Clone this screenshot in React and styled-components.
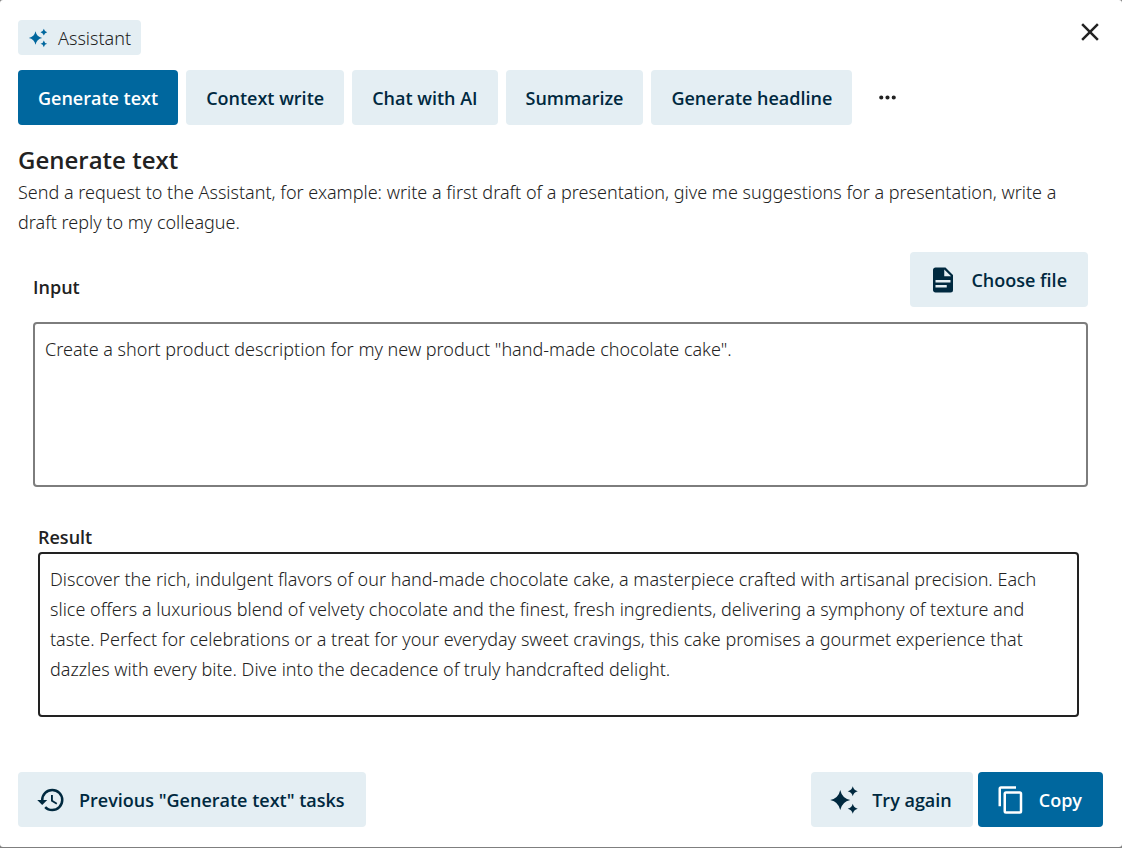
import React from "react"
import styled, { createGlobalStyle } from 'styled-components'

const GlobalStyle = createGlobalStyle`
  * {
    box-sizing: border-box;
  }
  body {
    margin: 0;
    background: #7f7f7f;
    color: #222;
    font-family: 'Noto Sans', 'Open Sans', sans-serif;
    font-size: 18px;
    font-weight: 300;
    line-height: 30px;
  }
  button, textarea {
    font: inherit;
  }
  button, h2, label {
    font-family: 'Open Sans', 'Noto Sans', sans-serif;
  }
`

const Modal = styled.main`
  display: flex;
  flex-direction: column;
  min-height: calc(100vh - 1px);
  padding: 20px 19px 20px 18px;
  border-radius: 3px;
  background: #fff;
`

const Header = styled.header`
  display: flex;
  justify-content: space-between;
  height: 35px;
`

const Badge = styled.div`
  display: flex;
  align-items: center;
  gap: 10px;
  padding: 0 10px;
  border-radius: 4px;
  background: #e4eef3;
  svg {
    color: #00679e;
  }
`

const IconButton = styled.button`
  display: flex;
  align-items: center;
  justify-content: center;
  width: ${props => props.$size}px;
  height: ${props => props.$size}px;
  padding: 0;
  border: none;
  background: none;
  color: #222;
  cursor: pointer;
`

const CloseSlot = styled.div`
  display: flex;
  align-items: center;
  height: 24px;
  margin-right: -2px;
`

const Tabs = styled.nav`
  display: flex;
  gap: 8px;
  margin-top: 15px;
`

const Button = styled.button`
  display: flex;
  align-items: center;
  justify-content: center;
  gap: 13px;
  height: 55px;
  padding: ${props => props.$icon ? '0 21px 0 18px' : '0 20px'};
  border: none;
  border-radius: 4px;
  background: ${props => props.$primary ? '#00679e' : '#e4eef3'};
  color: ${props => props.$primary ? '#fff' : '#00293f'};
  font-weight: 600;
  white-space: nowrap;
  cursor: pointer;
`

const Title = styled.h2`
  margin: 19px 0 1px;
  font-size: 24px;
  font-weight: 600;
  line-height: 32px;
`

const Description = styled.p`
  margin: 0;
  padding-right: 20px;
`

const Field = styled.section`
  display: flex;
  flex-direction: column;
  margin: ${props => props.$result ? '35px 24px 0 20px' : '15px 15px 0 15px'};
`

const FieldHead = styled.div`
  display: flex;
  align-items: flex-end;
  justify-content: space-between;
  margin-bottom: 15px;
  label {
    padding-bottom: 5px;
  }
`

const Label = styled.label`
  font-weight: 600;
`

const TextArea = styled.textarea`
  display: block;
  width: 100%;
  height: 165px;
  padding: 10px 20px 10px 10px;
  border: 2px solid ${props => props.readOnly ? '#222' : '#7d7d7d'};
  border-radius: 4px;
  outline: none;
  background: #fff;
  color: #222;
  resize: none;
`

const Footer = styled.footer`
  display: flex;
  justify-content: space-between;
  margin-top: auto;
`

const Actions = styled.div`
  display: flex;
  gap: 5px;
`

const paths = {
  creation: 'M19,1Q18.3,4.3 15,5Q18.3,5.7 19,9Q19.7,5.7 23,5Q19.7,4.3 19,1M9,4Q7.6,10.6 1,12Q7.6,13.4 9,20Q10.4,13.4 17,12Q10.4,10.6 9,4M19,15Q18.3,18.3 15,19Q18.3,19.7 19,23Q19.7,19.7 23,19Q19.7,18.3 19,15',
  close: 'M19,6.41L17.59,5L12,10.59L6.41,5L5,6.41L10.59,12L5,17.59L6.41,19L12,13.41L17.59,19L19,17.59L13.41,12L19,6.41Z',
  dots: 'M16,12A2,2 0 0,1 18,10A2,2 0 0,1 20,12A2,2 0 0,1 18,14A2,2 0 0,1 16,12M10,12A2,2 0 0,1 12,10A2,2 0 0,1 14,12A2,2 0 0,1 12,14A2,2 0 0,1 10,12M4,12A2,2 0 0,1 6,10A2,2 0 0,1 8,12A2,2 0 0,1 6,14A2,2 0 0,1 4,12Z',
  file: 'M13,9H18.5L13,3.5V9M6,2H14L20,8V20A2,2 0 0,1 18,22H6C4.89,22 4,21.1 4,20V4C4,2.89 4.89,2 6,2M15,18V16H6V18H15M18,14V12H6V14H18Z',
  history: 'M13.5,8H12V13L16.28,15.54L17,14.33L13.5,12.25V8M13,3A9,9 0 0,0 4,12H1L4.96,16.03L9,12H6A7,7 0 0,1 13,5A7,7 0 0,1 20,12A7,7 0 0,1 13,19C11.07,19 9.32,18.21 8.06,16.94L6.64,18.36C8.27,20 10.5,21 13,21A9,9 0 0,0 22,12A9,9 0 0,0 13,3',
  copy: 'M19,21H8V7H19M19,5H8A2,2 0 0,0 6,7V21A2,2 0 0,0 8,23H19A2,2 0 0,0 21,21V7A2,2 0 0,0 19,5M16,1H4A2,2 0 0,0 2,3V17H4V3H16V1Z',
}

const Icon = ({ name, size = 30 }) => (
  <svg width={size} height={size} viewBox="0 0 24 24" fill="currentColor" aria-hidden="true">
    <path d={paths[name]} />
  </svg>
)

const tasks = ['Generate text', 'Context write', 'Chat with AI', 'Summarize', 'Generate headline']

const defaultInput = 'Create a short product description for my new product "hand-made chocolate cake".'

const result = 'Discover the rich, indulgent flavors of our hand-made chocolate cake, a masterpiece crafted with artisanal precision. Each slice offers a luxurious blend of velvety chocolate and the finest, fresh ingredients, delivering a symphony of texture and taste. Perfect for celebrations or a treat for your everyday sweet cravings, this cake promises a gourmet experience that dazzles with every bite. Dive into the decadence of truly handcrafted delight.'

export default class App extends React.Component {
  state = {
    active: 'Generate text',
    input: defaultInput,
  }

  render() {
    const { active, input } = this.state

    return (
      <>
        <GlobalStyle />
        <Modal>
          <Header>
            <Badge>
              <Icon name="creation" size={20} />
              Assistant
            </Badge>
            <CloseSlot>
              <IconButton $size={30} aria-label="Close">
                <Icon name="close" />
              </IconButton>
            </CloseSlot>
          </Header>
          <Tabs>
            {tasks.map(task =>
              <Button
                key={task}
                $primary={task === active}
                onClick={() => this.setState({ active: task })}
              >
                {task}
              </Button>
            )}
            <IconButton $size={55} aria-label="More">
              <Icon name="dots" size={25} />
            </IconButton>
          </Tabs>
          <Title>{active}</Title>
          <Description>
            Send a request to the Assistant, for example: write a first draft of a presentation, give me suggestions for a presentation, write a draft reply to my colleague.
          </Description>
          <Field>
            <FieldHead>
              <Label htmlFor="input">Input</Label>
              <Button $icon>
                <Icon name="file" />
                Choose file
              </Button>
            </FieldHead>
            <TextArea
              id="input"
              spellCheck={false}
              value={input}
              onChange={e => this.setState({ input: e.target.value })}
            />
          </Field>
          <Field $result>
            <Label htmlFor="result">Result</Label>
            <TextArea id="result" readOnly value={result} />
          </Field>
          <Footer>
            <Button $icon>
              <Icon name="history" />
              Previous "{active}" tasks
            </Button>
            <Actions>
              <Button $icon>
                <Icon name="creation" />
                Try again
              </Button>
              <Button $icon $primary>
                <Icon name="copy" />
                Copy
              </Button>
            </Actions>
          </Footer>
        </Modal>
      </>
    )
  }
}
